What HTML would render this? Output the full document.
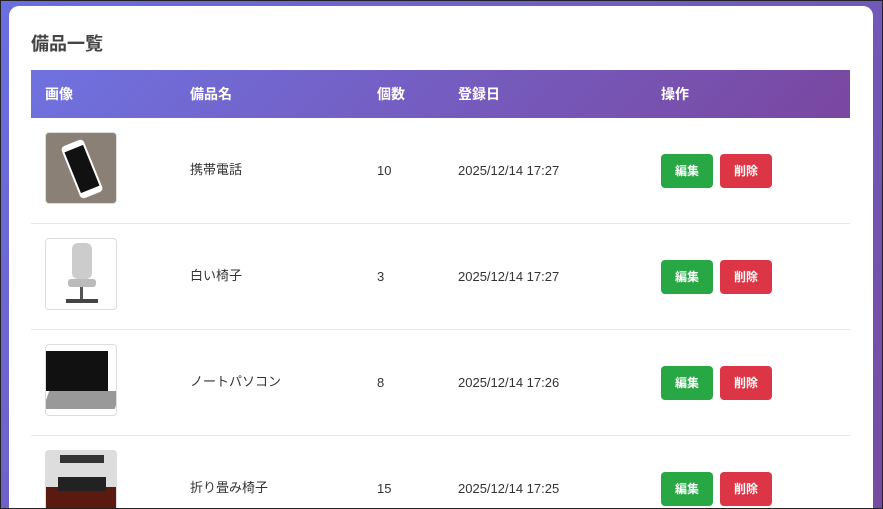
<!DOCTYPE html>
<html><head><meta charset="utf-8"><style>
*{margin:0;padding:0;box-sizing:border-box}
html,body{width:883px;height:509px;overflow:hidden}
body{background:linear-gradient(135deg,#6a6ee0,#764ba2);font-family:"Liberation Sans","Noto Sans CJK JP",sans-serif;position:relative}
.frame{position:absolute;left:0;top:0;width:883px;height:509px;border:1px solid #222;pointer-events:none}
.card{position:absolute;left:9px;top:6px;width:864px;height:503px;background:#fff;border-radius:10px 10px 0 0;overflow:hidden}
h2{position:absolute;left:22px;top:26px;font-size:18px;line-height:24px;font-weight:bold;color:#444}
.th{position:absolute;left:22px;top:64px;width:819px;height:48px;background:linear-gradient(135deg,#6f72e0,#7a47a0);color:#fff;font-weight:bold;font-size:14px}
.th span,.row span{position:absolute;line-height:16px}
.th span{top:16px}
.row{position:absolute;left:22px;width:819px;height:106px;border-bottom:1px solid #e8e8e8;font-size:13px;color:#333}
.row span{top:45px}
.row span.j{top:44px}
.img{position:absolute;left:14px;top:14px;width:72px;height:72px;border:1px solid #ddd;border-radius:4px;overflow:hidden}
.b{position:absolute;top:36px;width:52px;height:34px;border-radius:4px;color:#fff;font-weight:bold;font-size:12px;text-align:center;line-height:34px}
.e{left:630px;background:#28a745}.d{left:689px;background:#dc3545}
</style></head><body><div class="card">
<h2>備品一覧</h2>
<div class="th"><span style="left:14px">画像</span><span style="left:159px">備品名</span><span style="left:346px">個数</span><span style="left:427px">登録日</span><span style="left:630px">操作</span></div>
<div class="row" style="top:112px"><div class="img" style="background:#8a8075"><div style="position:absolute;left:24px;top:8px;width:24px;height:56px;background:#fff;border-radius:4px;transform:rotate(-22deg)"><div style="margin:6px 2px;height:44px;background:#111"></div></div></div><span class="j" style="left:159px">携帯電話</span><span style="left:346px">10</span><span style="left:427px">2025/12/14 17:27</span><div class="b e">編集</div><div class="b d">削除</div></div>
<div class="row" style="top:218px"><div class="img" style="background:#fff"><div style="position:absolute;left:26px;top:4px;width:20px;height:36px;background:#ccc;border-radius:6px"></div><div style="position:absolute;left:22px;top:40px;width:28px;height:8px;background:#bbb;border-radius:3px"></div><div style="position:absolute;left:34px;top:48px;width:3px;height:12px;background:#555"></div><div style="position:absolute;left:20px;top:60px;width:32px;height:4px;background:#444"></div></div><span class="j" style="left:159px">白い椅子</span><span style="left:346px">3</span><span style="left:427px">2025/12/14 17:27</span><div class="b e">編集</div><div class="b d">削除</div></div>
<div class="row" style="top:324px"><div class="img" style="background:#fff"><div style="position:absolute;left:0;top:6px;width:62px;height:40px;background:#111"></div><div style="position:absolute;left:0;top:46px;width:72px;height:18px;background:#999;transform:skewX(-20deg)"></div></div><span class="j" style="left:159px">ノートパソコン</span><span style="left:346px">8</span><span style="left:427px">2025/12/14 17:26</span><div class="b e">編集</div><div class="b d">削除</div></div>
<div class="row" style="top:430px"><div class="img" style="background:#ddd"><div style="position:absolute;left:0;top:36px;width:72px;height:36px;background:#5a1a10"></div><div style="position:absolute;left:12px;top:26px;width:48px;height:14px;background:#222"></div><div style="position:absolute;left:14px;top:4px;width:44px;height:8px;background:#333"></div></div><span class="j" style="left:159px">折り畳み椅子</span><span style="left:346px">15</span><span style="left:427px">2025/12/14 17:25</span><div class="b e">編集</div><div class="b d">削除</div></div>
</div><div class="frame"></div></body></html>
